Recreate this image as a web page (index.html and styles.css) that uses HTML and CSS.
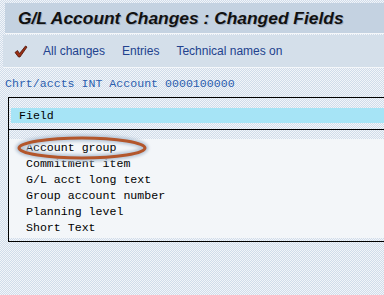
FILE: index.html
```html
<!DOCTYPE html>
<html>
<head>
<meta charset="utf-8">
<link rel="stylesheet" href="styles.css">
</head>
<body>
<div class="titlebar"><h1 class="title">G/L Account Changes : Changed Fields</h1></div>
<div class="toolbar">
  <svg class="check" width="14" height="13" viewBox="0 0 14 13">
    <path d="M1 7.5 L3.5 5.5 L5.5 8.5 L11.5 1 L13 2 L6 12 L4.5 12 Z" fill="#9a2f14" stroke="#4a1206" stroke-width="0.8" stroke-linejoin="round"/>
  </svg>
  <span class="tb-item">All changes</span>
  <span class="tb-item">Entries</span>
  <span class="tb-item">Technical names on</span>
</div>
<div class="content">
  <div class="info">Chrt/accts INT Account 0000100000</div>
  <div class="frame">
    <div class="head-wrap"><div class="head">Field</div></div>
    <div class="list-wrap">
      <ul class="list">
        <li>Account group</li>
        <li>Commitment item</li>
        <li>G/L acct long text</li>
        <li>Group account number</li>
        <li>Planning level</li>
        <li>Short Text</li>
      </ul>
      <svg class="circle" width="140" height="30" viewBox="0 0 140 30">
        <defs><filter id="blur" x="-10%" y="-50%" width="120%" height="200%"><feGaussianBlur stdDeviation="1.5"/></filter></defs>
        <ellipse cx="70" cy="15" rx="63" ry="10" fill="none" stroke="#b9c8d8" stroke-width="7" filter="url(#blur)"/>
        <ellipse cx="70" cy="15" rx="63" ry="10" fill="none" stroke="#b3562b" stroke-width="3"/>
      </svg>
    </div>
  </div>
</div>
</body>
</html>
```

FILE: styles.css
```css
html, body {
  margin: 0;
  padding: 0;
}
body {
  width: 384px;
  height: 295px;
  overflow: hidden;
  background-color: #e2e9f1;
  background-image: repeating-conic-gradient(#d0dcea 0 25%, #f2f5f9 0 50%);
  background-size: 2px 2px;
}
.titlebar {
  margin: 3px 0 0 5px;
  height: 30px;
  background: #c4d2e1;
  border-bottom: 1px solid #f4f7fa;
  display: flex;
  align-items: center;
}
.title {
  margin: 0 0 0 13px;
  font-family: "Liberation Sans", Arial, sans-serif;
  font-weight: bold;
  font-style: italic;
  font-size: 17.4px;
  color: #111;
  text-shadow: 1px 1px 0 rgba(90, 100, 120, 0.35);
}
.toolbar {
  margin: 1px 0 0 3px;
  height: 32px;
  background: #d4dfea;
  border-bottom: 1px solid #f4f7fa;
  display: flex;
  align-items: center;
  padding-left: 11px;
}
.check {
  display: block;
  margin-right: 15px;
  margin-top: 1px;
}
.tb-item {
  font-family: "Liberation Sans", Arial, sans-serif;
  font-size: 12px;
  color: #22428e;
  margin-right: 17px;
}
.content {
  padding-top: 9px;
}
.info {
  font-family: "Liberation Mono", "Courier New", monospace;
  font-size: 11.6px;
  line-height: 14px;
  color: #2c5eae;
  padding-left: 5px;
}
.frame {
  margin: 6px 0 0 8px;
  border: 1px solid #000;
  border-right: none;
}
.head-wrap {
  padding: 10px 0 6px 2px;
}
.head {
  height: 15px;
  background: #a6e4f6;
  font-family: "Liberation Mono", "Courier New", monospace;
  font-size: 11.6px;
  line-height: 15px;
  color: #000;
  padding-left: 8px;
}
.list-wrap {
  position: relative;
  border-top: 1px solid #000;
  padding: 9px 0 3px 0;
}
.list {
  list-style: none;
  margin: 0;
  padding: 1px 0 2px 17px;
  background: #f3f6f9;
  font-family: "Liberation Mono", "Courier New", monospace;
  font-size: 11.6px;
  line-height: 16px;
  color: #000;
}
.circle {
  position: absolute;
  left: 3px;
  top: 3px;
}
```
